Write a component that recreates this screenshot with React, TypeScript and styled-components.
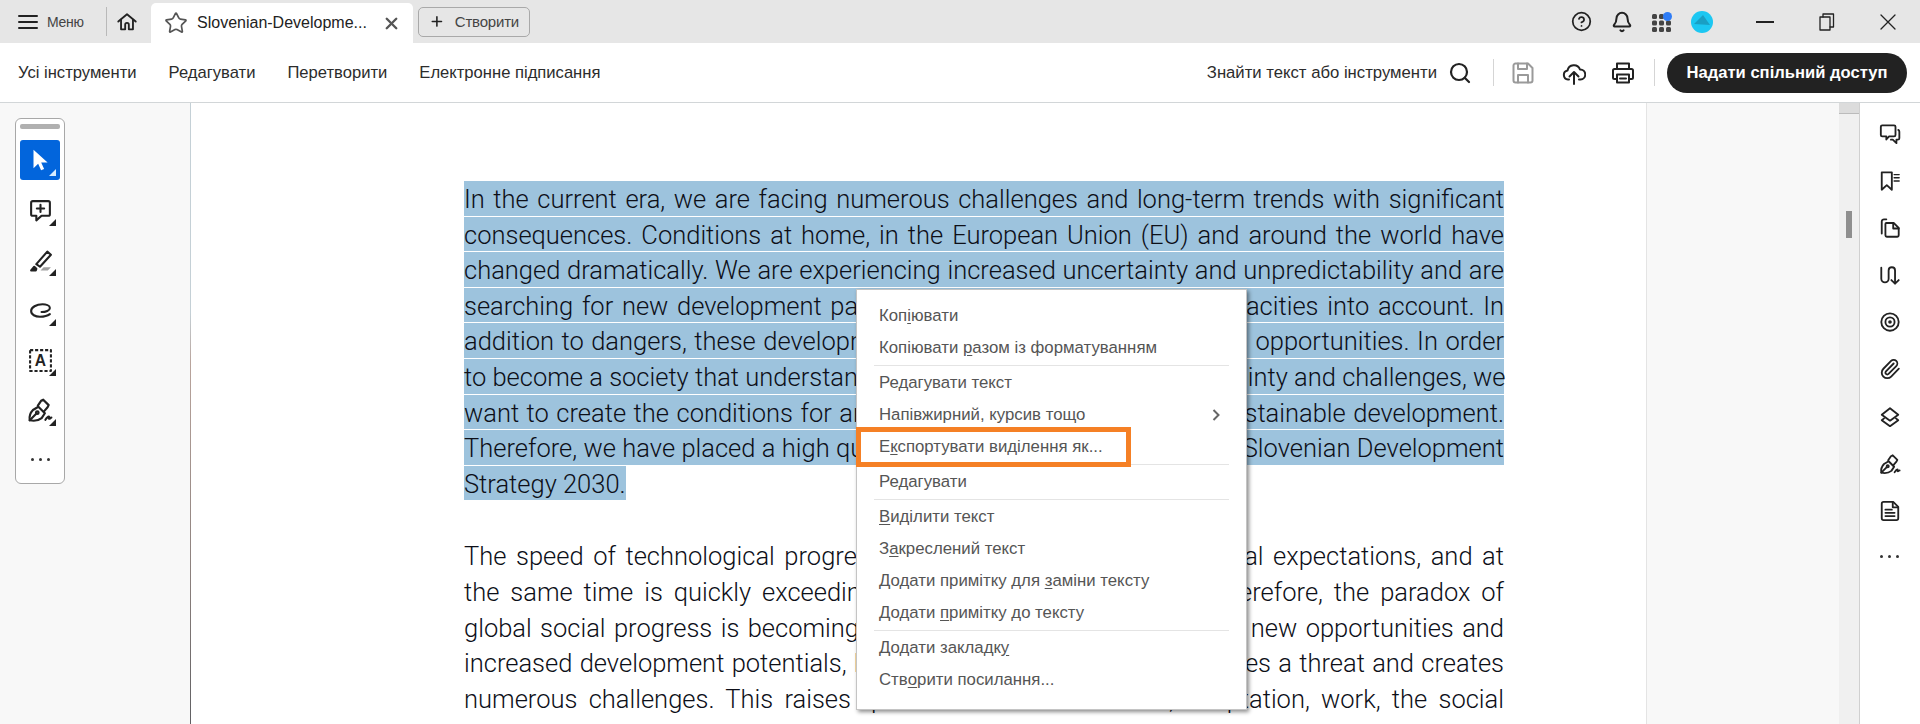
import React from "react";
import styled, { createGlobalStyle } from "styled-components";
import { CircleHelp, Bell, Search, Star, Plus, X, Paperclip } from "lucide-react";

const GlobalStyle = createGlobalStyle`
  html, body {
    margin: 0;
    padding: 0;
    background: #fff;
  }
`;

const selectedLines = [
  "In the current era, we are facing numerous challenges and long-term trends with significant",
  "consequences. Conditions at home, in the European Union (EU) and around the world have",
  "changed dramatically. We are experiencing increased uncertainty and unpredictability and are",
  "searching for new development paradigms that take the planet's capacities into account. In",
  "addition to dangers, these developments also bring with them various opportunities. In order",
  "to become a society that understands and can respond well to uncertainty and challenges, we",
  "want to create the conditions for and accelerate the transition to a sustainable development.",
  "Therefore, we have placed a high quality of life at the heart of the new Slovenian Development",
];

const plainLines = [
  "The speed of technological progress is outstripping even many social expectations, and at",
  "the same time is quickly exceeding our capacity to adapt to it. Therefore, the paradox of",
  "global social progress is becoming ever more evident: it offers many new opportunities and",
  "increased development potentials, but at the very same time also poses a threat and creates",
  "numerous challenges. This raises questions about education, adaptation, work, the social",
];

const PenIcon = ({ size }: { size?: number }) => (
  <Glyph viewBox="0 0 24 24" $w={size} $h={size}>
    <path d="M2.500 21.500c-.6-3.500.6-7 3-9.500l5-3 6 6-3 4.500c-2.500 2-7 2.800-11 2z" />
    <path d="M10 8l3-4.500 2-1 5 5-1 2-3.500 4" />
    <path d="M2.500 21.500l6-6" />
    <circle cx="9.500" cy="14.500" r="1.200" />
    <path d="M17 21c1-1.500 2-3 3-3s-.5 2 .5 2 1-1 2-1" />
  </Glyph>
);

const LeftTools = () => (
  <FloatingTools>
    <Grip />
    <ToolButton $active>
      <Glyph viewBox="0 0 24 24" $w={26} $h={26}>
        <path d="M6 2.500v17l4.300-4 2.700 6 2.800-1.200-2.700-5.900H19z" fill="#fff" stroke="none" />
      </Glyph>
    </ToolButton>
    <ToolButton>
      <Glyph viewBox="0 0 24 24" $w={25} $h={25}>
        <path d="M4.500 3h15a1.500 1.500 0 0 1 1.500 1.500v11a1.500 1.500 0 0 1-1.500 1.500H13l-5 4.500V17H4.500A1.500 1.500 0 0 1 3 15.500v-11A1.500 1.500 0 0 1 4.500 3z" />
        <path d="M12 6.500v7M8.500 10h7" />
      </Glyph>
    </ToolButton>
    <ToolButton>
      <Glyph viewBox="0 0 24 24" $w={25} $h={25}>
        <path d="M8 15.500L18.500 3.500l3.500 3L11.500 18l-3.500-2.500z" />
        <path d="M3 21.500l3-3.500 2 2-.500 1.500z" fill="#222" />
        <path d="M12 21.500l3-3h7l-3 3z" fill="#a0a0a0" stroke="none" />
      </Glyph>
    </ToolButton>
    <ToolButton>
      <Glyph viewBox="0 0 24 24" $w={25} $h={25}>
        <path d="M13 13.500C17 13.500 21 12 21 9.500 21 7 17 6 14 6 8 6 3 9 3 12.500 3 16 7 18 11.500 18 15 18 19 17 21 15.500" />
      </Glyph>
    </ToolButton>
    <ToolButton>
      <Glyph viewBox="0 0 24 24" $w={25} $h={25}>
        <rect x="2" y="2" width="20" height="20" strokeDasharray="3 1.800" strokeLinecap="butt" />
        <text x="12" y="17.500" textAnchor="middle" fontFamily="Liberation Sans" fontWeight="700" fontSize="15" fill="#222" stroke="none">
          A
        </text>
      </Glyph>
    </ToolButton>
    <ToolButton>
      <PenIcon size={26} />
    </ToolButton>
    <LeftDots>
      <i />
      <i />
      <i />
    </LeftDots>
  </FloatingTools>
);

const RightRail = () => (
  <Rail>
    <RailIcon>
      <Glyph viewBox="0 0 24 24">
        <path d="M3.500 2.500h13a1.500 1.500 0 0 1 1.500 1.500v9a1.500 1.500 0 0 1-1.500 1.500H11l-3 3.500v-3.500H3.500A1.500 1.500 0 0 1 2 13V4a1.500 1.500 0 0 1 1.500-1.500z" />
        <path d="M21 7.500c.8.400 1.200 1 1.200 2v7c0 1-.7 1.700-1.700 1.700H19V22l-4-3.800h-2" />
      </Glyph>
    </RailIcon>
    <RailIcon>
      <Glyph viewBox="0 0 24 24">
        <path d="M3 2.500h11v19l-5.500-5-5.500 5z" />
        <path d="M16.500 5H22M16.500 8.500H22M16.500 12H22" strokeWidth="1.500" />
      </Glyph>
    </RailIcon>
    <RailIcon>
      <Glyph viewBox="0 0 24 24">
        <path d="M8 2.500H5.500A2.500 2.500 0 0 0 3 5v13" />
        <path d="M8 6.500h8l5.500 5.500v8a1.500 1.500 0 0 1-1.500 1.500H8.500A1.500 1.500 0 0 1 7 20V7.500a1 1 0 0 1 1-1z" />
        <path d="M15.500 6.500v6h6" />
      </Glyph>
    </RailIcon>
    <RailIcon>
      <Glyph viewBox="0 0 24 24">
        <path d="M2.500 4v12a4 4 0 0 0 8 0V7a3.500 3.500 0 0 1 7 0v14" />
        <path d="M13.500 17.500l4 4 4-4" />
      </Glyph>
    </RailIcon>
    <RailIcon>
      <Glyph viewBox="0 0 24 24">
        <circle cx="12" cy="12" r="9.500" />
        <circle cx="12" cy="12" r="5" />
        <circle cx="12" cy="12" r="1" />
      </Glyph>
    </RailIcon>
    <RailIcon>
      <Paperclip size={22} color="#222" strokeWidth={2} />
    </RailIcon>
    <RailIcon>
      <Glyph viewBox="0 0 24 24">
        <path d="M12 2.500l9 7-9 6.500-9-6.500z" />
        <path d="M5.500 13.500L3 15.500l9 6.500 9-6.500-2.500-2" />
      </Glyph>
    </RailIcon>
    <RailIcon>
      <PenIcon />
    </RailIcon>
    <RailIcon>
      <Glyph viewBox="0 0 24 24">
        <path d="M5 2h10.500L21 7.500V20a2 2 0 0 1-2 2H5a2 2 0 0 1-2-2V4a2 2 0 0 1 2-2z" />
        <path d="M15 2.500V8h5.500" />
        <path d="M7 10.500h7M7 14h10M7 17.500h10" />
      </Glyph>
    </RailIcon>
    <MoreDots>
      <i />
      <i />
      <i />
    </MoreDots>
  </Rail>
);

const ContextMenu = () => (
  <Menu>
    <MenuItem>
      Коп<u>і</u>ювати
    </MenuItem>
    <MenuItem>
      Копіювати <u>р</u>азом із форматуванням
    </MenuItem>
    <MenuRule />
    <MenuItem>Редагувати текст</MenuItem>
    <MenuItem>
      Напівжирний, курсив тощо
      <MenuChevron viewBox="0 0 10 14">
        <path d="M2.500 2l5 5-5 5" />
      </MenuChevron>
    </MenuItem>
    <MenuItem>
      Е<u>к</u>спортувати виділення як...
    </MenuItem>
    <MenuRule />
    <MenuItem>Редагувати</MenuItem>
    <MenuRule />
    <MenuItem>
      <u>В</u>иділити текст
    </MenuItem>
    <MenuItem>
      З<u>а</u>креслений текст
    </MenuItem>
    <MenuItem>
      Додати примітку для <u>з</u>аміни тексту
    </MenuItem>
    <MenuItem>
      Додати <u>п</u>римітку до тексту
    </MenuItem>
    <MenuRule />
    <MenuItem>
      Додати закладк<u>у</u>
    </MenuItem>
    <MenuItem>
      Ств<u>о</u>рити посилання...
    </MenuItem>
    <Callout />
  </Menu>
);

const App = () => {
  return (
    <Root>
      <GlobalStyle />
      <TabBar>
        <MenuButton>
          <Glyph viewBox="0 0 20 16" $w={20} $h={16}>
            <path d="M1 2h18M1 8h18M1 14h18" />
          </Glyph>
          <span>Меню</span>
        </MenuButton>
        <TabDivider />
        <HomeButton>
          <Glyph viewBox="0 0 24 24">
            <path d="M2.500 11.500L12 3.500l9.500 8" />
            <path d="M5.500 9.500V20h4.500v-5a2 2 0 0 1 4 0v5h4.500V9.500" />
          </Glyph>
        </HomeButton>
        <Tab>
          <Star size={24} color="#555" strokeWidth={1.7} />
          <TabTitle>Slovenian-Developme...</TabTitle>
          <X size={19} color="#555" strokeWidth={3} />
        </Tab>
        <CreateButton>
          <Plus size={17} color="#222" strokeWidth={2.4} />
          <span>Створити</span>
        </CreateButton>
        <TabBarRight>
          <CircleHelp size={21} color="#222" strokeWidth={2} />
          <Bell size={22} color="#222" strokeWidth={2.2} />
          <AppsIcon viewBox="0 0 20 20">
            <rect x="0" y="2" width="5" height="5" rx="1.500" />
            <rect x="7" y="2" width="5" height="5" rx="1.500" />
            <rect x="0" y="8.500" width="5" height="5" rx="1.500" />
            <rect x="7" y="8.500" width="5" height="5" rx="1.500" />
            <rect x="14" y="8.500" width="5" height="5" rx="1.500" />
            <rect x="0" y="15" width="5" height="5" rx="1.500" />
            <rect x="7" y="15" width="5" height="5" rx="1.500" />
            <rect x="14" y="15" width="5" height="5" rx="1.500" />
            <circle cx="15.500" cy="4.500" r="4.500" fill="#2e7cf6" />
          </AppsIcon>
          <AvatarIcon viewBox="0 0 22 22">
            <circle cx="11" cy="11" r="11" fill="#1cc7f2" />
            <path d="M3 13l9-9 7 10z" fill="#1a9fc4" />
          </AvatarIcon>
          <WindowControls>
            <Glyph viewBox="0 0 18 18" $w={18} $h={18}>
              <path d="M0 9h18" />
            </Glyph>
            <Glyph viewBox="0 0 16 18" $w={16} $h={18} $thin>
              <rect x="1" y="4" width="10" height="13" />
              <path d="M4 4V1h10.500v13H11" />
            </Glyph>
            <Glyph viewBox="0 0 16 16" $w={16} $h={16} $thin>
              <path d="M1 1l14 14M15 1L1 15" />
            </Glyph>
          </WindowControls>
        </TabBarRight>
      </TabBar>

      <Toolbar>
        <NavList>
          <NavItem>Усі інструменти</NavItem>
          <NavItem>Редагувати</NavItem>
          <NavItem>Перетворити</NavItem>
          <NavItem>Електронне підписання</NavItem>
        </NavList>
        <Actions>
          <FindLabel>Знайти текст або інструменти</FindLabel>
          <ActionSlot $gap={11}>
            <Search size={24} color="#222" strokeWidth={2.2} />
          </ActionSlot>
          <ActionDivider $gap={21} />
          <ActionSlot $gap={17}>
            <Glyph viewBox="0 0 24 24" $muted $w={24} $h={24}>
              <path d="M4.500 2.500H17l4.500 4.500v12.500a2 2 0 0 1-2 2h-15a2 2 0 0 1-2-2v-15a2 2 0 0 1 2-2z" />
              <path d="M7 2.500V8h9V2.500M7 21.500V14h10v7.500" />
            </Glyph>
          </ActionSlot>
          <ActionSlot $gap={27}>
            <Glyph viewBox="0 0 24 24" $w={24} $h={24}>
              <path d="M7 18.500H6A4.500 4.500 0 0 1 5.500 9.600 6.500 6.500 0 0 1 18 8.500a5 5 0 0 1 .5 10h-1.500" />
              <path d="M12 23V11.500M7.500 15.500l4.500-4.500 4.500 4.500" />
            </Glyph>
          </ActionSlot>
          <ActionSlot $gap={25}>
            <Glyph viewBox="0 0 24 24" $w={24} $h={24}>
              <path d="M6 8V2.500h12V8" />
              <path d="M6 18H3.500A1.500 1.500 0 0 1 2 16.500v-7A1.500 1.500 0 0 1 3.500 8h17A1.500 1.500 0 0 1 22 9.500v7a1.500 1.500 0 0 1-1.500 1.500H18" />
              <rect x="6" y="13.500" width="12" height="8" />
              <path d="M9 17.500h6" />
            </Glyph>
          </ActionSlot>
          <ActionDivider $gap={19} />
          <ShareButton>Надати спільний доступ</ShareButton>
        </Actions>
      </Toolbar>

      <Workspace>
        <LeftPanel>
          <LeftTools />
        </LeftPanel>
        <PageArea>
          <Paragraph>
            {selectedLines.map((line, index) => (
              <TextLine key={index} $selected>
                {line}
              </TextLine>
            ))}
            <TextLine $selected $last>
              Strategy 2030.
            </TextLine>
          </Paragraph>
          <Paragraph>
            {plainLines.map((line, index) => (
              <TextLine key={index}>{line}</TextLine>
            ))}
          </Paragraph>
        </PageArea>
        <RightGutter />
        <ScrollTrack>
          <ScrollCap />
          <ScrollThumb />
        </ScrollTrack>
        <RightRail />
      </Workspace>

      <ContextMenu />
    </Root>
  );
};

const Root = styled.div`
  position: relative;
  display: flex;
  flex-direction: column;
  width: 1920px;
  height: 724px;
  overflow: hidden;
  font-family: "Liberation Sans", Arial, sans-serif;
  color: #2c2c2c;
`;

const Glyph = styled.svg<{ $w?: number; $h?: number; $thin?: boolean; $muted?: boolean }>`
  flex: none;
  width: ${(p) => p.$w ?? 22}px;
  height: ${(p) => p.$h ?? 22}px;
  fill: none;
  stroke: ${(p) => (p.$muted ? "#9a9a9a" : "#222")};
  stroke-width: ${(p) => (p.$thin ? 1.3 : 2)};
  stroke-linejoin: round;
  stroke-linecap: round;
`;

const TabBar = styled.div`
  display: flex;
  align-items: center;
  flex: none;
  height: 43px;
  background: #e6e6e6;
`;

const MenuButton = styled.div`
  display: flex;
  align-items: center;
  gap: 9px;
  width: 106px;
  padding-left: 18px;
  box-sizing: border-box;
  font-size: 14px;
  letter-spacing: -0.3px;
  color: #444;
`;

const TabDivider = styled.div`
  width: 1px;
  height: 29px;
  background: #b9b9b9;
`;

const HomeButton = styled.div`
  display: flex;
  width: 44px;
  padding-left: 9px;
  box-sizing: border-box;
`;

const Tab = styled.div`
  display: flex;
  align-items: center;
  align-self: flex-end;
  width: 262px;
  height: 40px;
  padding: 0 12px 0 13px;
  box-sizing: border-box;
  background: #fff;
  border-radius: 5px 5px 0 0;
`;

const TabTitle = styled.span`
  flex: 1;
  margin-left: 9px;
  font-size: 16px;
  color: #222;
`;

const CreateButton = styled.div`
  display: flex;
  align-items: center;
  gap: 10px;
  height: 30px;
  margin-left: 5px;
  padding: 0 10px;
  box-sizing: border-box;
  width: 112px;
  border: 1px solid #a9a9a9;
  border-radius: 5px;
  font-size: 15px;
  letter-spacing: -0.2px;
  color: #444;
`;

const TabBarRight = styled.div`
  display: flex;
  align-items: center;
  gap: 19px;
  margin-left: auto;
`;

const AppsIcon = styled.svg`
  width: 20px;
  height: 20px;
  fill: #444;
`;

const AvatarIcon = styled.svg`
  width: 22px;
  height: 22px;
`;

const WindowControls = styled.div`
  display: flex;
  align-items: center;
  gap: 45px;
  margin-left: 24px;
  padding-right: 24px;
`;

const Toolbar = styled.div`
  display: flex;
  align-items: center;
  justify-content: space-between;
  flex: none;
  height: 59px;
  padding: 0 13px 0 18px;
  border-bottom: 1px solid #d2d6d8;
  background: #fff;
`;

const NavList = styled.div`
  display: flex;
  gap: 32px;
`;

const NavItem = styled.span`
  font-size: 16.6px;
  color: #2c2c2c;
`;

const Actions = styled.div`
  display: flex;
  align-items: center;
`;

const FindLabel = styled.span`
  font-size: 16.7px;
  color: #2c2c2c;
`;

const ActionSlot = styled.div<{ $gap: number }>`
  display: flex;
  margin-left: ${(p) => p.$gap}px;
`;

const ActionDivider = styled.div<{ $gap: number }>`
  width: 1px;
  height: 27px;
  margin-left: ${(p) => p.$gap}px;
  background: #d5d5d5;
`;

const ShareButton = styled.div`
  display: flex;
  align-items: center;
  justify-content: center;
  width: 240px;
  height: 40px;
  margin-left: 12px;
  border-radius: 20px;
  background: #222;
  color: #fff;
  font-size: 16.6px;
  font-weight: 700;
`;

const Workspace = styled.div`
  display: flex;
  flex: 1;
  min-height: 0;
`;

const LeftPanel = styled.div`
  flex: none;
  width: 190px;
  padding: 15px 0 0 15px;
  box-sizing: border-box;
  background: #f8f8f8;
`;

const FloatingTools = styled.div`
  display: flex;
  flex-direction: column;
  align-items: center;
  width: 50px;
  height: 366px;
  padding: 5px 0 0;
  box-sizing: border-box;
  background: #fff;
  border: 1px solid #a8a8a8;
  border-radius: 6px;
`;

const Grip = styled.div`
  width: 40px;
  height: 5px;
  margin-bottom: 11px;
  border-radius: 2px;
  background: #b0b0b0;
`;

const ToolButton = styled.div<{ $active?: boolean }>`
  position: relative;
  display: flex;
  align-items: center;
  justify-content: center;
  width: 40px;
  height: 40px;
  margin-bottom: 10px;
  border-radius: 3px;
  background: ${(p) => (p.$active ? "#0265dc" : "transparent")};

  &::after {
    content: "";
    position: absolute;
    right: 4px;
    bottom: 4px;
    width: 0;
    height: 0;
    border-left: 7px solid transparent;
    border-bottom: 7px solid ${(p) => (p.$active ? "#d6ecff" : "#222")};
  }
`;

const MoreDots = styled.div`
  display: flex;
  justify-content: center;
  gap: 5px;
  height: 20px;
  align-items: center;

  i {
    width: 3px;
    height: 3px;
    border-radius: 50%;
    background: #333;
  }
`;

const LeftDots = styled(MoreDots)`
  margin-top: 9px;
`;

const PageArea = styled.div`
  flex: none;
  width: 1456px;
  padding: 78px 142px 0 273px;
  box-sizing: border-box;
  background: #fff;
  border-left: 1px solid;
  border-image: linear-gradient(#c4d0d6 0 210px, #b9a49c 260px, #8a7f7c 480px, #5f5f62 100%) 1;
  overflow: hidden;
`;

const Paragraph = styled.div`
  margin-bottom: 38px;
`;

const TextLine = styled.div<{ $selected?: boolean; $last?: boolean }>`
  height: 34.6px;
  margin-bottom: 1px;
  line-height: 36px;
  white-space: nowrap;
  font-family: Roboto, sans-serif;
  font-weight: 300;
  font-size: 25.5px;
  color: #0d0f18;
  text-align: justify;
  text-align-last: ${(p) => (p.$last ? "left" : "justify")};
  width: ${(p) => (p.$last ? "fit-content" : "auto")};
  background: ${(p) => (p.$selected ? "#9dc3dd" : "transparent")};
`;

const RightGutter = styled.div`
  flex: none;
  width: 193px;
  background: #f8f8f8;
  border-left: 1px solid #e4e4e4;
  box-sizing: border-box;
`;

const ScrollTrack = styled.div`
  position: relative;
  flex: none;
  width: 20px;
  background: #f0f0f0;
`;

const ScrollCap = styled.div`
  height: 10px;
  background: #dcdcdc;
  border-bottom: 1px solid #bbb;
`;

const ScrollThumb = styled.div`
  position: absolute;
  top: 108px;
  left: 7px;
  width: 6px;
  height: 27px;
  background: #8f8f8f;
`;

const Rail = styled.div`
  flex: none;
  display: flex;
  flex-direction: column;
  align-items: center;
  width: 60px;
  padding-top: 20px;
  box-sizing: border-box;
  background: #fff;
  border-left: 1px solid #d0d0d0;
  gap: 25.1px;
`;

const RailIcon = styled.div`
  display: flex;
  width: 22px;
  height: 22px;
`;

const Menu = styled.div`
  position: absolute;
  left: 856px;
  top: 289px;
  width: 391px;
  height: 421px;
  padding: 10px 0 0;
  box-sizing: border-box;
  background: #fff;
  border: 1px solid #c4c4c4;
  box-shadow: 2px 2px 4px rgba(0, 0, 0, 0.45);
`;

const MenuItem = styled.div`
  display: flex;
  align-items: center;
  height: 32px;
  padding-left: 22px;
  font-size: 16.8px;
  color: #555;
  white-space: pre;

  u {
    text-underline-offset: 2px;
  }
`;

const MenuChevron = styled.svg`
  width: 10px;
  height: 14px;
  margin-left: auto;
  margin-right: 25px;
  fill: none;
  stroke: #666;
  stroke-width: 2;
`;

const MenuRule = styled.div`
  height: 1px;
  margin: 1px 17px 1px 17px;
  background: #e4e4e4;
`;

const Callout = styled.div`
  position: absolute;
  left: -1px;
  top: 137px;
  width: 275px;
  height: 40px;
  box-sizing: border-box;
  border: 5px solid #f58025;
`;

export default App;
